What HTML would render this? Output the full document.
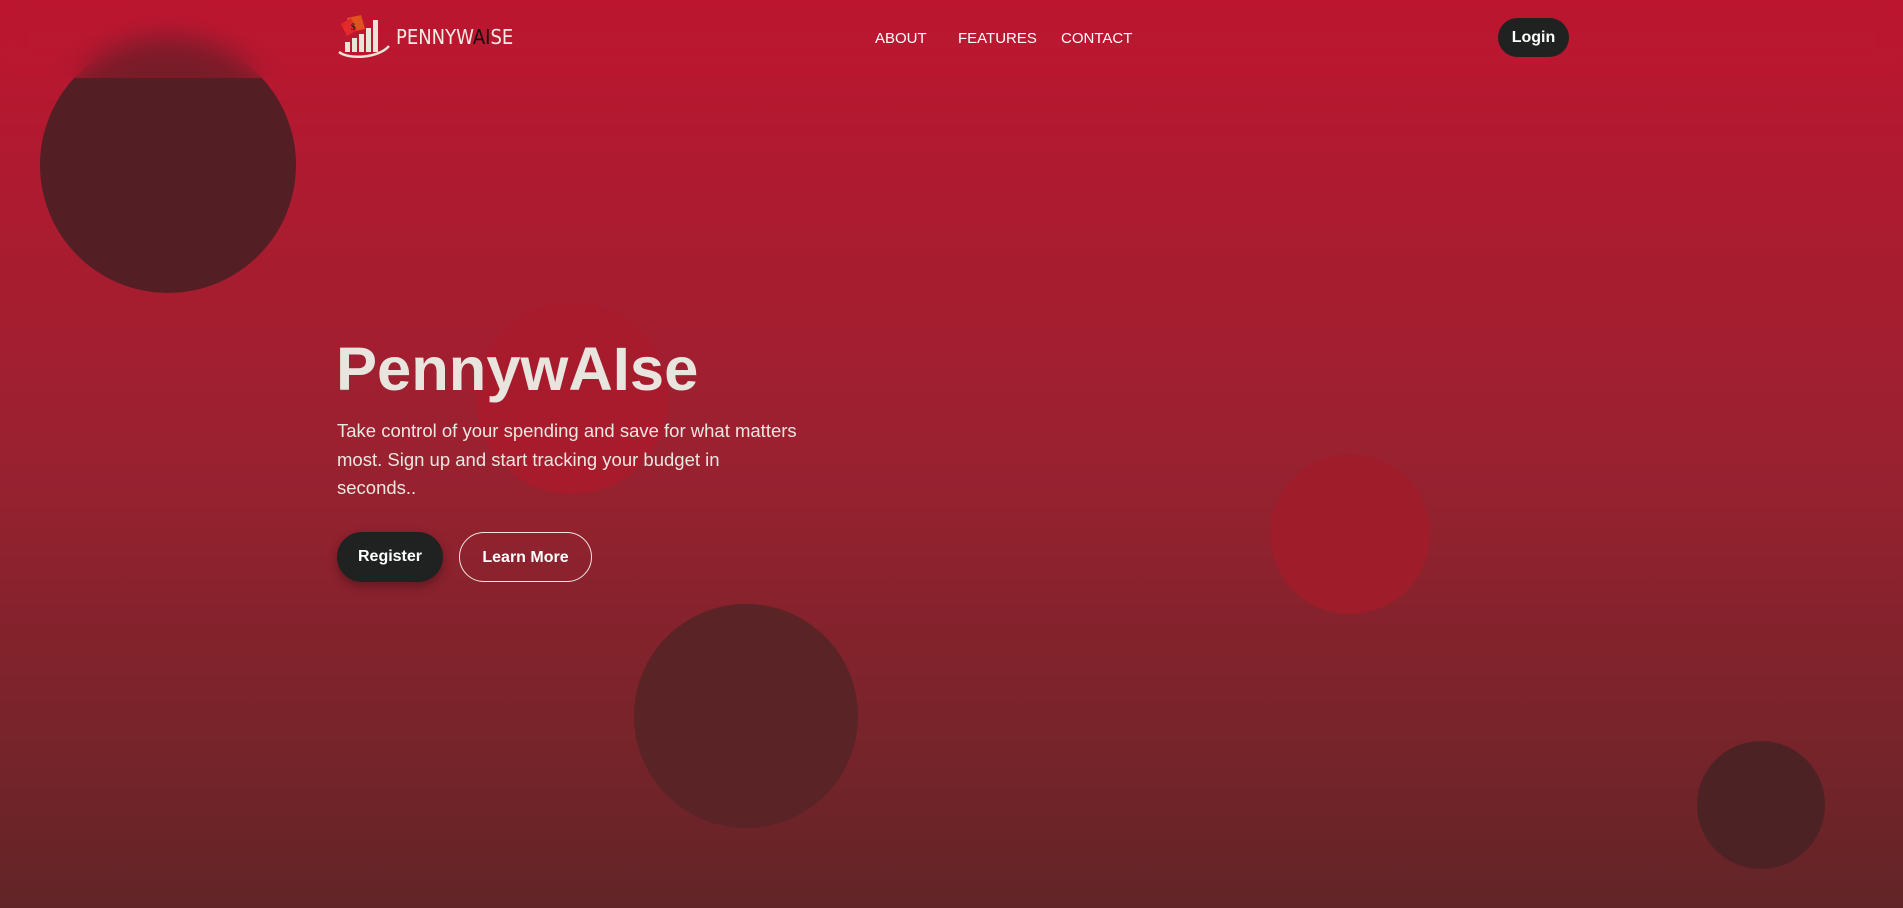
<!DOCTYPE html>
<html><head><meta charset="utf-8"><style>
*{margin:0;padding:0;box-sizing:border-box}
html,body{width:1903px;height:908px;overflow:hidden}
body{background:linear-gradient(180deg,#bc1630 0%,#9a2130 50%,#622527 100%);font-family:"Liberation Sans",sans-serif;position:relative;color:#e8e4de}
.c{position:absolute;border-radius:50%}
header{position:absolute;left:0;top:0;width:1903px;height:78px;background:rgba(188,22,48,0.35);backdrop-filter:blur(14px);-webkit-backdrop-filter:blur(14px);z-index:5}
.nav a{position:absolute;top:30px;color:#fff;font-size:15px;text-decoration:none}
.login{position:absolute;left:1498px;top:18px;width:71px;height:39px;border-radius:20px;background:#1f2221;color:#fff;font-size:16px;font-weight:bold;text-align:center;line-height:39px}
h1{position:absolute;left:336px;top:334px;font-size:61.5px;font-weight:900;color:#e8e4de;letter-spacing:0;z-index:2}
p{position:absolute;left:337px;top:417px;width:463px;font-size:18.5px;line-height:28.5px;color:#ece6e0;z-index:2}
.btn{position:absolute;top:532px;height:50px;border-radius:25px;font-size:16px;font-weight:bold;text-align:center;line-height:50px;z-index:2}
</style></head><body>
<div class="c" style="left:40px;top:37px;width:256px;height:256px;background:#531f25"></div>
<div class="c" style="left:476px;top:302px;width:192px;height:192px;background:#a81b2d"></div>
<div class="c" style="left:1270px;top:454px;width:160px;height:160px;background:#9f1c2b"></div>
<div class="c" style="left:634px;top:604px;width:224px;height:224px;background:#5a2326"></div>
<div class="c" style="left:1697px;top:741px;width:128px;height:128px;background:#4d2224"></div>
<header>
<svg style="position:absolute;left:337px;top:14px" width="56" height="46" viewBox="0 0 56 46">
<path d="M10 4l14 -3 4 14 -14 3z" fill="#e0521e"/><path d="M4 10l10 -6 6 12 -10 6z" fill="#e22a2a"/>
<text x="14" y="16" font-size="9" fill="#111" font-family="Liberation Serif">$</text>
<rect x="8" y="28" width="5" height="10" fill="#e8e4d6"/><rect x="15" y="24" width="5" height="14" fill="#e8e4d6"/><rect x="22" y="20" width="5" height="18" fill="#e8e4d6"/><rect x="29" y="14" width="5" height="24" fill="#e8e4d6"/><rect x="36" y="6" width="5" height="32" fill="#e8e4d6"/>
<path d="M2 38c10 8 40 6 50 -6" stroke="#e8e4d6" stroke-width="2.5" fill="none"/>
</svg>
<div style="position:absolute;left:396px;top:25px;font-size:20px;color:#f3ece4;font-family:'DejaVu Sans Condensed','DejaVu Sans',sans-serif;letter-spacing:0">PENNYW<span style="color:#111">AI</span>SE</div>
<div class="nav"><a style="left:875px">ABOUT</a><a style="left:958px">FEATURES</a><a style="left:1061px">CONTACT</a></div>
<div class="login">Login</div>
</header>
<h1>PennywAIse</h1>
<p>Take control of your spending and save for what matters most. Sign up and start tracking your budget in seconds..</p>
<div class="btn" style="left:337px;width:106px;background:#1f2221;color:#fff;box-shadow:0 4px 10px rgba(0,0,0,0.3)">Register</div>
<div class="btn" style="left:459px;width:133px;border:1.5px solid #f0e8e0;color:#fff">Learn More</div>
</body></html>
